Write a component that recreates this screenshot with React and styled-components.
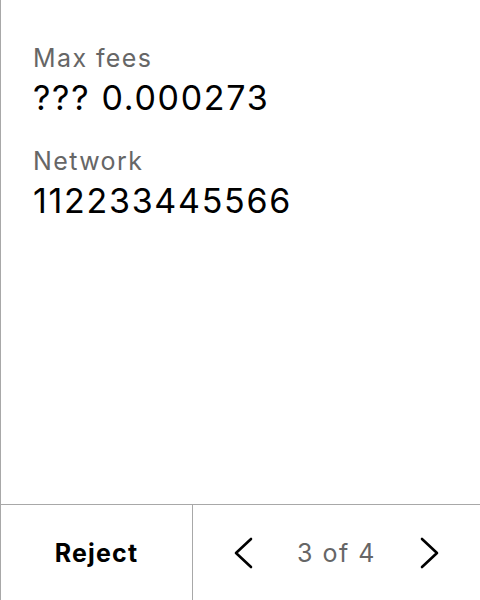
import styled, { createGlobalStyle } from 'styled-components'

const GlobalStyle = createGlobalStyle`
    html, body {
        margin: 0;
        padding: 0;
        background: #fff;
    }
    body {
        font-family: Inter, "Liberation Sans", sans-serif;
    }
`

const Screen = styled.div`
    width: 480px;
    height: 600px;
    box-sizing: border-box;
    border-left: 1px solid #a8a8a8;
    display: flex;
    flex-direction: column;
`

const Body = styled.div`
    flex: 1;
    padding: 42px 32px 0;
    display: flex;
    flex-direction: column;
    gap: 26px;
`

const Field = styled.div`
    display: flex;
    flex-direction: column;
    gap: 3px;
`

const Label = styled.div`
    font-size: 25px;
    line-height: 32px;
    letter-spacing: 1.4px;
    color: #666;
`

const Value = styled.div`
    font-size: 34px;
    line-height: 42px;
    letter-spacing: 1.7px;
    color: #000;
`

const Footer = styled.div`
    height: 96px;
    box-sizing: border-box;
    border-top: 1px solid #a8a8a8;
    display: grid;
    grid-template-columns: 192px 1fr;
`

const RejectButton = styled.div`
    border-right: 1px solid #a8a8a8;
    display: flex;
    align-items: center;
    justify-content: center;
    font-size: 25px;
    font-weight: 700;
    letter-spacing: 1.2px;
    color: #000;
`

const Pager = styled.div`
    display: flex;
    align-items: center;
    justify-content: space-between;
    padding: 0 41px 0 41px;
`

const PageText = styled.div`
    font-size: 25px;
    letter-spacing: 1.5px;
    color: #666;
`

const Chevron = ({ dir }) => (
    <svg width="20" height="32" viewBox="0 0 20 32" fill="none">
        <path
            d={dir === 'left' ? 'M17 2 L2 16 L17 30' : 'M3 2 L18 16 L3 30'}
            stroke="#000"
            strokeWidth="2.6"
            strokeLinecap="round"
            strokeLinejoin="round"
        />
    </svg>
)

const App = () => {
    return (
        <Screen>
            <GlobalStyle />
            <Body>
                <Field>
                    <Label>Max fees</Label>
                    <Value>??? 0.000273</Value>
                </Field>
                <Field>
                    <Label>Network</Label>
                    <Value>112233445566</Value>
                </Field>
            </Body>
            <Footer>
                <RejectButton>Reject</RejectButton>
                <Pager>
                    <Chevron dir="left" />
                    <PageText>3 of 4</PageText>
                    <Chevron dir="right" />
                </Pager>
            </Footer>
        </Screen>
    )
}

export default App
